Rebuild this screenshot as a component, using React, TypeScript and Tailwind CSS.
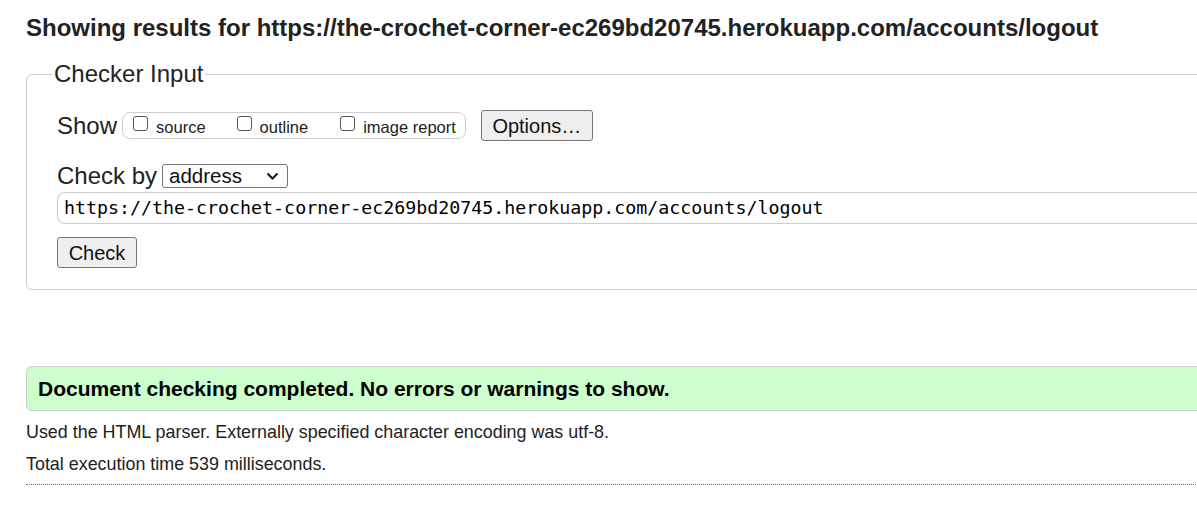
import React from 'react';

const URL = 'https://the-crochet-corner-ec269bd20745.herokuapp.com/accounts/logout';

function Box({ label, className = '' }: { label: string; className?: string }) {
  return (
    <label className={`flex items-center ${className}`}>
      <input type="checkbox" className="appearance-none w-[15px] h-[15px] mr-[8px] mb-[5px] bg-white border border-[#555] rounded-[3px]" />
      <span className="mt-[4px]">{label}</span>
    </label>
  );
}

function App() {
  return (
    <div className="w-full overflow-hidden bg-white" style={{ fontFamily: '"Liberation Sans", Arial, sans-serif' }}>
      <div className="w-[1240px] px-[26px] pt-[13px] pb-[30px] text-[#222]">
        {/* heading */}
        <h2 className="text-[24px] font-bold leading-[30px] text-[#222]">Showing results for {URL}</h2>

        {/* checker input */}
        <fieldset className="mt-[18px] border border-[#ccc] rounded-l-[6px] pl-[30px] pb-[21px]">
          <legend className="ml-[-5px] px-[2px] text-[24px] leading-[26px] text-[#222]">Checker Input</legend>

          <div className="flex items-center mt-[23px] h-[31px]">
            <span className="text-[24px] mr-[5px]">Show</span>
            <div className="flex items-center h-[27px] border border-[#ccc] rounded-[8px] pl-[10px] pr-[9px] text-[16.5px]">
              <Box label="source" />
              <Box label="outline" className="ml-[31px]" />
              <Box label="image report" className="ml-[32px]" />
            </div>
            <button className="ml-[15px] h-[31px] w-[112px] bg-[#efefef] border border-[#767676] rounded-[3px] text-[20px] text-[#111]">
              Options…
            </button>
          </div>

          <div className="flex items-center mt-[23px] h-[24px]">
            <span className="text-[24px] mr-[5px]">Check by</span>
            <div className="flex items-center justify-between w-[126px] h-[24px] border border-[#767676] rounded-[3px] pl-[6px] pr-[8px] text-[20.5px] text-[#111]">
              <span>address</span>
              <svg width="13" height="8" viewBox="0 0 13 8" fill="none" stroke="#111" strokeWidth="2">
                <path d="M1.5 1.5 L6.5 6.5 L11.5 1.5" />
              </svg>
            </div>
          </div>

          <div className="mt-[4px] h-[32px] border border-[#ccc] border-r-0 rounded-l-[8px] flex items-center pl-[6px]">
            <span className="text-[18.3px] text-black" style={{ fontFamily: '"DejaVu Sans Mono", monospace' }}>{URL}</span>
          </div>

          <button className="mt-[13px] h-[31px] w-[80px] bg-[#efefef] border border-[#767676] rounded-[3px] text-[20px] text-[#111]">
            Check
          </button>
        </fieldset>

        {/* result */}
        <div className="mt-[76px] h-[45px] border border-[#ccc] rounded-l-[6px] bg-[#ccffcc] flex items-center pl-[11px]">
          <span className="text-[21px] font-bold text-black">Document checking completed. No errors or warnings to show.</span>
        </div>
        <p className="mt-[9px] text-[17.9px] leading-[24px] text-[#222]">Used the HTML parser. Externally specified character encoding was utf-8.</p>
        <p className="mt-[8px] text-[17.9px] leading-[24px] text-[#222]">Total execution time 539 milliseconds.</p>
        <div className="mt-[8px] border-t border-dotted border-[#666]" />
      </div>
    </div>
  );
}

export default App;
